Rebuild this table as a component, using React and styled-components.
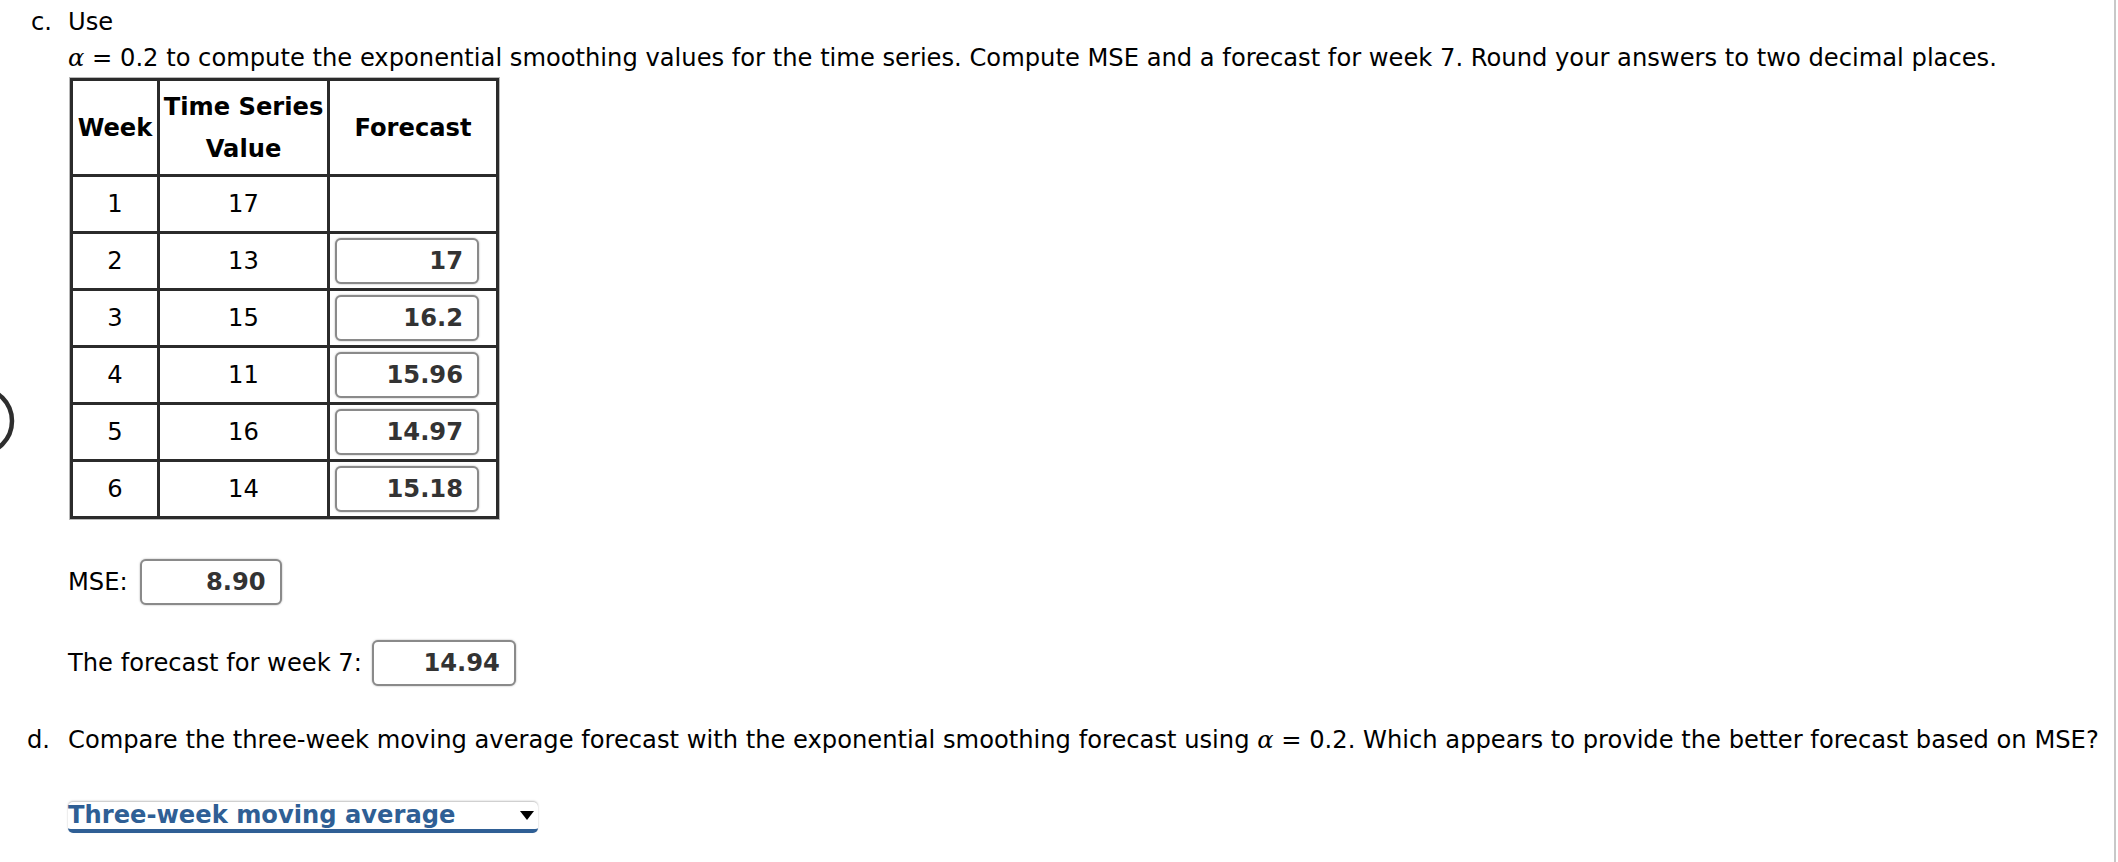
import React from "react";
import styled, { createGlobalStyle } from "styled-components";

const Global = createGlobalStyle`
  html, body { margin: 0; padding: 0; background: #fff; }
  body {
    font-family: "DejaVu Sans", sans-serif;
    font-size: 24.2px;
    color: #000;
  }
`;

const Page = styled.div`
  position: relative;
  width: 2116px;
  min-height: 862px;
  border-right: 2px solid #c8c8c8;
  overflow: hidden;
  box-sizing: border-box;
`;

const Content = styled.div`
  display: flex;
  flex-direction: column;
  align-items: flex-start;
  padding-top: 4px;
`;

const Part = styled.div`
  display: flex;
  align-items: flex-start;
  margin-top: ${(p) => p.$top || 0}px;
`;

const PartLabel = styled.div`
  width: ${(p) => p.$w || 37}px;
  padding-left: ${(p) => p.$left || 31}px;
  flex: none;
  line-height: 36px;
`;

const PartBody = styled.div`
  display: flex;
  flex-direction: column;
  align-items: flex-start;
`;

const Line = styled.div`
  line-height: 36px;
  white-space: nowrap;
`;

const Alpha = styled.span`
  font-family: "DejaVu Serif", serif;
  font-style: italic;
`;

const Table = styled.table`
  border-collapse: collapse;
  margin-top: 2px;
  margin-left: 2px;
  border: 3px solid #2b2b2b;
  outline: 1px solid #b8b8b8;
`;

const Th = styled.th`
  border: 3px solid #2b2b2b;
  font-weight: bold;
  line-height: 42px;
  height: 96px;
  padding: 0 2px;
  width: ${(p) => p.$w}px;
  box-sizing: border-box;
`;

const Td = styled.td`
  border: 3px solid #2b2b2b;
  height: 57px;
  box-sizing: border-box;
  text-align: center;
  padding: 0;
  padding-left: ${(p) => (p.$input ? 5 : 0)}px;
`;

const ValueBox = styled.div`
  box-sizing: border-box;
  width: ${(p) => p.$w || 144}px;
  height: 46px;
  border: 2px solid #8a8a8a;
  border-radius: 6px;
  box-shadow: 0 0 2px rgba(0, 0, 0, 0.35);
  background: #fff;
  color: #333;
  font-weight: bold;
  text-align: right;
  padding-right: 14px;
  line-height: 42px;
`;

const FieldRow = styled.div`
  display: flex;
  align-items: center;
  gap: ${(p) => p.$gap || 10}px;
  margin-top: ${(p) => p.$top}px;
  margin-left: 68px;
`;

const Select = styled.div`
  display: flex;
  align-items: center;
  justify-content: space-between;
  width: 470px;
  height: 31px;
  box-sizing: border-box;
  margin-top: 44px;
  background: #fff;
  border-radius: 5px;
  box-shadow: 0 -1px 2px rgba(0, 0, 0, 0.25);
  border-bottom: 4px solid #2f5f95;
  color: #2f5f95;
  font-weight: bold;
  padding-right: 4px;
  line-height: 27px;
`;

const Caret = styled.span`
  width: 0;
  height: 0;
  border-left: 7px solid transparent;
  border-right: 7px solid transparent;
  border-top: 9px solid #000;
`;

const SideDial = styled.svg`
  position: absolute;
  left: 0;
  top: 383px;
`;

const rows = [
  [1, 17, null],
  [2, 13, "17"],
  [3, 15, "16.2"],
  [4, 11, "15.96"],
  [5, 16, "14.97"],
  [6, 14, "15.18"],
];

export default function App() {
  return (
    <>
      <Global />
      <Page>
        <SideDial width="20" height="76" viewBox="0 0 20 76">
          <circle cx="-21" cy="38" r="33" fill="none" stroke="#2e2e2e" strokeWidth="4.5" />
        </SideDial>
        <Content>
          <Part>
            <PartLabel>c.</PartLabel>
            <PartBody>
              <Line>Use</Line>
              <Line>
                <Alpha>α</Alpha> = 0.2 to compute the exponential smoothing values for the time series. Compute MSE and a forecast for week 7. Round your answers to two decimal places.
              </Line>
              <Table>
                <thead>
                  <tr>
                    <Th $w={87}>Week</Th>
                    <Th $w={170}>
                      Time Series
                      <br />
                      Value
                    </Th>
                    <Th $w={169}>Forecast</Th>
                  </tr>
                </thead>
                <tbody>
                  {rows.map(([w, v, f]) => (
                    <tr key={w}>
                      <Td>{w}</Td>
                      <Td>{v}</Td>
                      <Td $input={!!f}>{f && <ValueBox>{f}</ValueBox>}</Td>
                    </tr>
                  ))}
                </tbody>
              </Table>
            </PartBody>
          </Part>
          <FieldRow $top={40} $gap={12}>
            <span>MSE:</span>
            <ValueBox $w={142}>8.90</ValueBox>
          </FieldRow>
          <FieldRow $top={35} $gap={10}>
            <span>The forecast for week 7:</span>
            <ValueBox $w={144}>14.94</ValueBox>
          </FieldRow>
          <Part $top={36}>
            <PartLabel $left={27} $w={41}>d.</PartLabel>
            <PartBody>
              <Line>
                Compare the three-week moving average forecast with the exponential smoothing forecast using <Alpha>α</Alpha> = 0.2. Which appears to provide the better forecast based on MSE?
              </Line>
              <Select>
                <span>Three-week moving average</span>
                <Caret />
              </Select>
            </PartBody>
          </Part>
        </Content>
      </Page>
    </>
  );
}
